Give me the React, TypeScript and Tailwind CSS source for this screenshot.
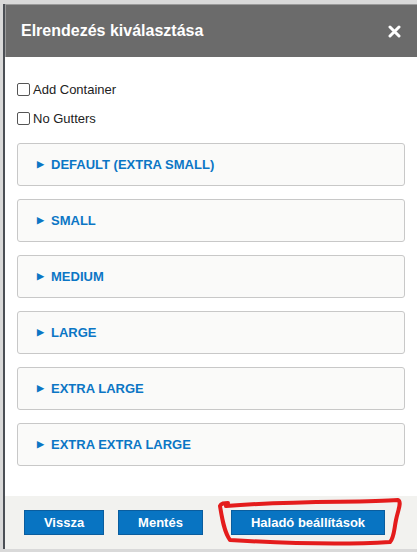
const sections = [
  "DEFAULT (EXTRA SMALL)",
  "SMALL",
  "MEDIUM",
  "LARGE",
  "EXTRA LARGE",
  "EXTRA EXTRA LARGE",
];

function Checkbox({ label }: { label: string }) {
  return (
    <label className="flex items-center h-[29px] gap-[3px] text-[13px] text-[#222]">
      <span className="w-[13px] h-[13px] border border-[#555] rounded-[2px] bg-white" />
      {label}
    </label>
  );
}

export default function App() {
  return (
    <div
      className="relative w-[417px] h-[552px] bg-[#d9d9d9] pt-[4px] pl-[3px] overflow-hidden"
      style={{ fontFamily: '"Liberation Sans", Arial, sans-serif' }}
    >
      <div className="flex flex-col h-[545px] border-l-2 border-[#4b4f55] bg-white">
        {/* Header */}
        <div className="flex items-center justify-between h-[53px] bg-[#6b6b6b] pl-[15px] pr-[16px] border-t border-l border-[#9a9a9a]">
          <h1 className="text-[16px] font-bold text-white">Elrendezés kiválasztása</h1>
          <svg width="13" height="13" viewBox="0 0 13 13">
            <path d="M2 2 L11 11 M11 2 L2 11" stroke="#fff" strokeWidth="3" strokeLinecap="round" />
          </svg>
        </div>

        {/* Body */}
        <div className="flex-1 px-[12px] pt-[18px]">
          <Checkbox label="Add Container" />
          <Checkbox label="No Gutters" />
          <div className="mt-[10px] flex flex-col gap-[13px]">
            {sections.map((s) => (
              <div
                key={s}
                className="h-[43px] flex items-center pl-[19px] border border-[#c8c8c8] rounded-[3px] bg-[#fafaf9] text-[13px] font-bold text-[#0b76c5]"
              >
                <span className="text-[9px] mr-[7px]">▶</span>
                {s}
              </div>
            ))}
          </div>
        </div>

        {/* Footer */}
        <div className="flex items-center h-[53px] bg-[#f2f2ef] pl-[19px]">
          <button className="w-[80px] h-[25px] bg-[#0874c2] border border-[#0a5d9e] text-white text-[13px] font-bold">
            Vissza
          </button>
          <button className="ml-[14px] w-[85px] h-[25px] bg-[#0874c2] border border-[#0a5d9e] text-white text-[13px] font-bold">
            Mentés
          </button>
          <button className="ml-[28px] w-[154px] h-[25px] bg-[#0874c2] border border-[#0a5d9e] text-white text-[13px] font-bold">
            Haladó beállítások
          </button>
        </div>
      </div>

      {/* red annotation */}
      <svg className="absolute left-0 top-0 pointer-events-none" width="417" height="552">
        <path
          d="M226 506 C 300 500, 360 503, 398 500 C 402 502, 398 510, 396 520 C 394 530, 394 538, 390 542 C 340 545, 280 543, 230 540 C 224 532, 222 518, 220 506 C 221 503, 224 503, 228 503"
          fill="none"
          stroke="#e41c1c"
          strokeWidth="4"
          strokeLinejoin="round"
          strokeLinecap="round"
        />
      </svg>
    </div>
  );
}
